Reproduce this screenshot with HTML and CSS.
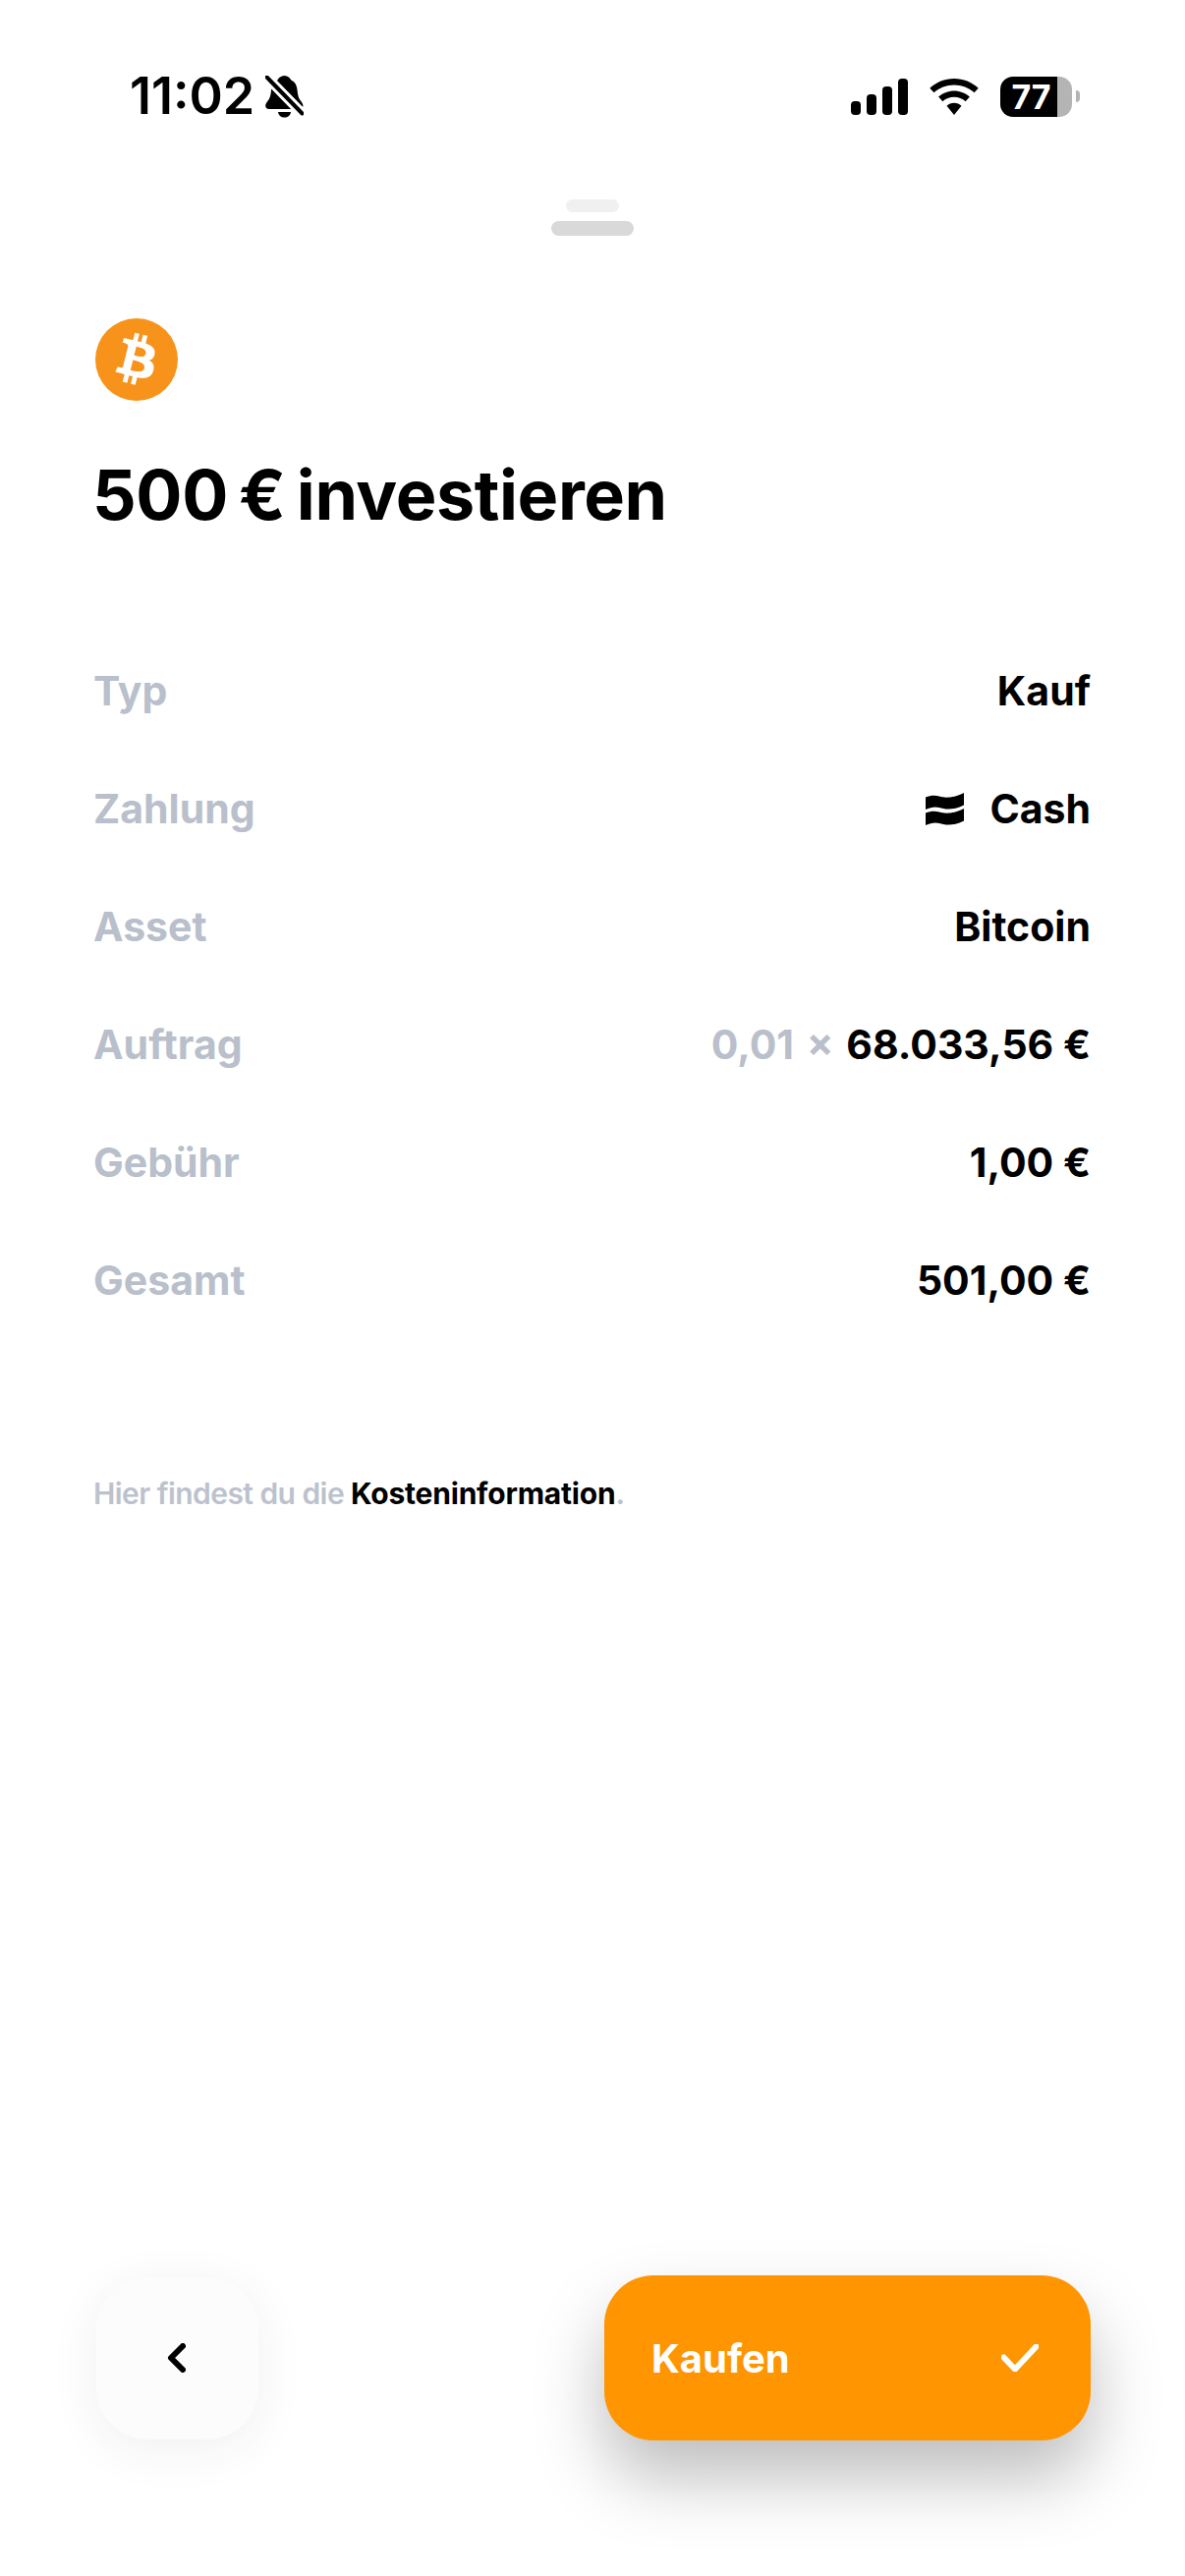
FILE: index.html
```html
<!DOCTYPE html>
<html lang="de">
<head>
    <meta charset="UTF-8">
    <meta name="viewport" content="width=device-width, initial-scale=1.0">
    <title>500 € investieren</title>
    <link rel="stylesheet" href="styles.css">
</head>
<body>

<header class="status-bar">
    <div class="status-left">
        <span class="time">11:02</span>
        <svg class="bell" viewBox="0 0 39 43">
            <path d="M19.5 0c3.6 0 5.6 2.2 6.6 4.6 4.4 1.7 6 5.600 6.500 10.400.4 4.700 1.100 8 4 11.500 1.300 1.600 1.800 2.800 1.800 4.200 0 2-1.500 3.300-3.800 3.300H4c-2.300 0-3.800-1.300-3.800-3.300 0-1.400.5-2.600 1.800-4.200 2.900-3.500 3.600-6.800 4-11.500.5-4.800 2.100-8.700 6.500-10.400C13.500 2.200 15.900 0 19.500 0z"/>
            <path d="M13 37h13c-.4 3.300-3 5.600-6.500 5.600S13.400 40.300 13 37z"/>
            <path class="bell-cut" d="M1.500 1.500l36 37"/>
            <path class="bell-slash" d="M1.500 1.500l36 37"/>
        </svg>
    </div>
    <div class="status-right">
        <div class="signal">
            <span class="bar bar-1"></span>
            <span class="bar bar-2"></span>
            <span class="bar bar-3"></span>
            <span class="bar bar-4"></span>
        </div>
        <svg class="wifi" viewBox="0 0 50 37">
            <path d="M25 0c9.500 0 18.200 3.700 24.700 9.700l-4.200 4.600C40.100 9.300 32.900 6.400 25 6.400S9.900 9.300 4.500 14.300L.3 9.700C6.800 3.700 15.500 0 25 0z"/>
            <path d="M25 12.400c6.100 0 11.700 2.300 15.900 6.100l-4.300 4.700c-3-2.800-7.100-4.500-11.600-4.500s-8.600 1.700-11.600 4.500l-4.300-4.700c4.200-3.800 9.800-6.100 15.900-6.100z"/>
            <path d="M25 24.800c2.900 0 5.500 1.100 7.500 2.900L25 37l-7.500-9.300c2-1.800 4.600-2.900 7.500-2.900z"/>
        </svg>
        <div class="battery">
            <div class="battery-body"><span class="battery-level">77</span></div>
            <span class="battery-nub"></span>
        </div>
    </div>
</header>

<div class="handle">
    <span class="handle-back"></span>
    <span class="handle-front"></span>
</div>

<main class="content">
    <svg class="coin" viewBox="0 0 64 64">
        <circle cx="32" cy="32" r="32" fill="#f7931a"/>
        <path fill="#fff" d="M46.103 27.444c.637-4.258-2.605-6.547-7.038-8.074l1.438-5.768-3.511-.875-1.4 5.616c-.923-.23-1.871-.447-2.813-.662l1.41-5.653-3.51-.875-1.439 5.766c-.764-.174-1.514-.346-2.242-.527l.004-.018-4.842-1.209-.934 3.75s2.605.597 2.55.634c1.422.355 1.679 1.296 1.636 2.042l-1.638 6.571c.098.025.225.061.365.117l-.371-.092-2.296 9.205c-.174.432-.615 1.08-1.609.834.035.051-2.552-.637-2.552-.637l-1.743 4.019 4.569 1.139c.85.213 1.683.436 2.503.646l-1.453 5.834 3.507.875 1.439-5.772c.958.26 1.888.5 2.798.726l-1.434 5.745 3.511.875 1.453-5.823c5.987 1.133 10.489.676 12.384-4.739 1.527-4.36-.076-6.875-3.226-8.515 2.294-.529 4.022-2.038 4.483-5.155zM38.08 38.69c-1.085 4.36-8.426 2.003-10.806 1.412l1.928-7.729c2.38.594 10.012 1.77 8.878 6.317zm1.086-11.31c-.99 3.966-7.1 1.951-9.082 1.457l1.748-7.01c1.982.494 8.365 1.416 7.334 5.553z"/>
    </svg>

    <h1 class="title">500 € investieren</h1>

    <section class="details">
        <div class="row">
            <span class="label">Typ</span>
            <span class="value">Kauf</span>
        </div>
        <div class="row">
            <span class="label">Zahlung</span>
            <span class="value value-icon">
                <svg class="cash" viewBox="0 0 39 33">
                    <path d="M0 4.500C5 2.500 9 2 14 3.500S27 6 39 0v12.500c-12 6-20 4-25 2.500S5 15 0 17z"/>
                    <path d="M0 20.500C5 18.500 9 18 14 19.500S27 22 39 16v12.500c-12 6-20 4-25 2.500S5 31 0 33z"/>
                </svg>
                Cash
            </span>
        </div>
        <div class="row">
            <span class="label">Asset</span>
            <span class="value">Bitcoin</span>
        </div>
        <div class="row">
            <span class="label">Auftrag</span>
            <span class="value"><span class="muted">0,01 × </span>68.033,56 €</span>
        </div>
        <div class="row">
            <span class="label">Gebühr</span>
            <span class="value">1,00 €</span>
        </div>
        <div class="row">
            <span class="label">Gesamt</span>
            <span class="value">501,00 €</span>
        </div>
    </section>

    <p class="note">Hier findest du die <a class="note-link" href="#">Kosteninformation</a>.</p>
</main>

<footer class="actions">
    <button class="back" aria-label="Zurück">
        <svg class="back-icon" viewBox="0 0 20 30">
            <path d="M17 3L5 15l12 12"/>
        </svg>
    </button>
    <button class="buy">
        <span>Kaufen</span>
        <svg class="buy-icon" viewBox="0 0 38 28">
            <path d="M2.500 13.500L14 25.500 35.500 2.500"/>
        </svg>
    </button>
</footer>

</body>
</html>
```

FILE: styles.css
```css
* {
    box-sizing: border-box;
}

html, body {
    height: 100%;
}

body {
    background-color: white;
    color: black;
    font-family: Inter, "Liberation Sans", sans-serif;
    margin: 0;
    height: 2622px;
    display: flex;
    flex-direction: column;
    overflow: hidden;
}

.status-bar {
    display: flex;
    justify-content: space-between;
    align-items: center;
    height: 196px;
    padding: 0 107px 0 132px;
    flex-shrink: 0;
}

.status-left {
    display: flex;
    align-items: center;
    gap: 11px;
}

.time {
    font-size: 52px;
    font-weight: 600;
    line-height: 60px;
}

.bell {
    width: 39px;
    height: 43px;
}

.bell path {
    fill: black;
}

.bell .bell-cut {
    fill: none;
    stroke: white;
    stroke-width: 10px;
}

.bell .bell-slash {
    fill: none;
    stroke: black;
    stroke-width: 4px;
    stroke-linecap: round;
}

.status-right {
    display: flex;
    align-items: center;
    gap: 22px;
}

.signal {
    display: flex;
    align-items: flex-end;
    gap: 6px;
    height: 37px;
}

.bar {
    width: 10px;
    background-color: black;
    border-radius: 4px;
}

.bar-1 { height: 14px; }
.bar-2 { height: 21px; }
.bar-3 { height: 29px; }
.bar-4 { height: 37px; }

.wifi {
    width: 50px;
    height: 37px;
}

.battery {
    display: flex;
    align-items: center;
    gap: 4px;
}

.battery-body {
    width: 73px;
    height: 41px;
    border-radius: 13px;
    background: linear-gradient(to right, black 58px, #b4b4b4 58px);
    overflow: hidden;
}

.battery-level {
    display: block;
    width: 58px;
    padding-left: 5px;
    color: white;
    font-size: 34px;
    font-weight: 700;
    line-height: 41px;
    text-align: center;
}

.battery-nub {
    width: 4px;
    height: 12px;
    border-radius: 0 6px 6px 0;
    background-color: #b4b4b4;
}

.handle {
    display: flex;
    flex-direction: column;
    align-items: center;
    gap: 9px;
    margin-top: 7px;
    flex-shrink: 0;
}

.handle-back {
    width: 54px;
    height: 13px;
    border-radius: 7px;
    background-color: #f0f0f0;
}

.handle-front {
    width: 84px;
    height: 15px;
    border-radius: 8px;
    background-color: #d9d9d9;
}

.content {
    padding: 84px 96px 0 95px;
    flex: 1;
}

.coin {
    display: block;
    width: 84px;
    height: 84px;
    margin-left: 2px;
}

.title {
    margin: 54px 0 0 -1px;
    font-size: 70px;
    font-weight: 700;
    line-height: 84px;
    letter-spacing: -0.4px;
    word-spacing: -5px;
}

.details {
    margin-top: 97px;
}

.row {
    display: flex;
    justify-content: space-between;
    align-items: center;
    height: 120px;
    font-size: 41px;
    font-weight: 700;
}

.label, .muted {
    color: #b9bfcb;
}

.muted {
    word-spacing: 3px;
}

.value-icon {
    display: flex;
    align-items: center;
    gap: 26px;
}

.cash {
    width: 39px;
    height: 33px;
}

.note {
    margin: 139px 0 0;
    font-size: 30px;
    font-weight: 600;
    line-height: 36px;
    letter-spacing: -0.55px;
    color: #bcc2cd;
}

.note-link {
    color: black;
    font-weight: 700;
    letter-spacing: -0.2px;
    text-decoration: none;
}

.actions {
    display: flex;
    justify-content: space-between;
    align-items: center;
    padding: 0 96px 138px 98px;
    flex-shrink: 0;
}

button {
    border: none;
    font-family: inherit;
    cursor: pointer;
}

.back {
    display: flex;
    align-items: center;
    justify-content: center;
    width: 165px;
    height: 165px;
    border-radius: 52px;
    background-color: #fcfcfd;
    box-shadow: 0 10px 50px rgba(40, 40, 70, 0.07);
}

.back-icon {
    width: 20px;
    height: 30px;
    margin-left: -4px;
}

.back-icon path {
    fill: none;
    stroke: black;
    stroke-width: 6px;
    stroke-linecap: round;
    stroke-linejoin: round;
}

.buy {
    display: flex;
    align-items: center;
    justify-content: space-between;
    width: 495px;
    height: 168px;
    padding: 0 53px 0 48px;
    border-radius: 50px;
    background-color: #ff9500;
    color: white;
    font-size: 40px;
    font-weight: 700;
    box-shadow: 0 38px 70px rgba(0, 0, 0, 0.26);
}

.buy-icon {
    width: 38px;
    height: 28px;
}

.buy-icon path {
    fill: none;
    stroke: white;
    stroke-width: 6px;
    stroke-linecap: round;
    stroke-linejoin: round;
}
```
